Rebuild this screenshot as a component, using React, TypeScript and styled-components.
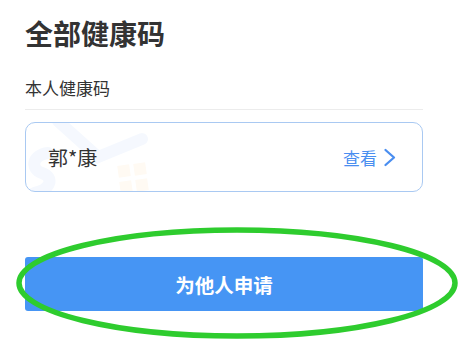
import React from "react";
import styled, { createGlobalStyle } from "styled-components";

const Global = createGlobalStyle`
  html, body { margin: 0; padding: 0; background: #ffffff; }
  body { font-family: "Noto Sans CJK SC", "Noto Sans", sans-serif; }
`;

const Page = styled.div`
  position: relative;
  width: 460px;
  height: 341px;
  overflow: hidden;
  padding: 16px 0 0 25px;
  box-sizing: border-box;
`;

const Column = styled.div`
  width: 398px;
  display: flex;
  flex-direction: column;
`;

const Title = styled.h1`
  margin: 0;
  font-size: 28px;
  line-height: 34px;
  font-weight: 700;
  color: #333333;
`;

const SectionLabel = styled.div`
  margin-top: 27px;
  padding-bottom: 10px;
  font-size: 17px;
  line-height: 22px;
  color: #333333;
  border-bottom: 1px solid #ececec;
`;

const Card = styled.div`
  position: relative;
  margin-top: 12px;
  height: 70px;
  box-sizing: border-box;
  border: 1px solid #a9c9f2;
  border-radius: 10px;
  display: flex;
  align-items: center;
  justify-content: space-between;
  padding: 0 26px 0 22px;
  overflow: hidden;
  background: #ffffff;
`;

const Watermark = styled.svg`
  position: absolute;
  left: 0;
  top: 0;
  pointer-events: none;
`;

const Name = styled.span`
  position: relative;
  font-size: 20px;
  color: #333333;
`;

const ViewLink = styled.span`
  position: relative;
  display: flex;
  align-items: center;
  gap: 6px;
  font-size: 17px;
  color: #4a8ef0;
`;

const ApplyButton = styled.button`
  margin-top: 65px;
  height: 54px;
  border: none;
  border-radius: 3px;
  background: #4695f4;
  color: #ffffff;
  font-family: inherit;
  font-size: 19.5px;
  font-weight: 700;
  cursor: pointer;
`;

const Highlight = styled.svg`
  position: absolute;
  left: 0;
  top: 0;
  pointer-events: none;
`;

export default function App() {
  return (
    <>
      <Global />
      <Page>
        <Column>
          <Title>全部健康码</Title>
          <SectionLabel>本人健康码</SectionLabel>
          <Card>
            <Watermark width="200" height="70" viewBox="0 0 200 70">
              <g opacity="0.05" fill="none" stroke="#3a7be0" strokeWidth="12" strokeLinecap="round">
                <path d="M32 -2 L72 34 L116 16" />
                <path d="M22 30 C6 32 4 46 16 50 C28 54 26 66 8 70" />
              </g>
              <g opacity="0.06" fill="#f0a030">
                <rect x="92" y="42" width="12" height="12" transform="rotate(-8 98 48)" />
                <rect x="108" y="40" width="12" height="12" transform="rotate(-8 114 46)" />
                <rect x="94" y="58" width="12" height="12" transform="rotate(-8 100 64)" />
                <rect x="110" y="56" width="12" height="12" transform="rotate(-8 116 62)" />
              </g>
            </Watermark>
            <Name>郭*康</Name>
            <ViewLink>
              查看
              <svg width="13" height="19" viewBox="0 0 13 19">
                <path d="M2.5 2 L11 9.5 L2.5 17" fill="none" stroke="#4a8ef0" strokeWidth="2.3" strokeLinecap="round" strokeLinejoin="round" />
              </svg>
            </ViewLink>
          </Card>
          <ApplyButton>为他人申请</ApplyButton>
        </Column>
        <Highlight width="460" height="341" viewBox="0 0 460 341">
          <ellipse cx="237" cy="283" rx="218" ry="53" fill="none" stroke="#2ecc2e" strokeWidth="5.5" />
        </Highlight>
      </Page>
    </>
  );
}
